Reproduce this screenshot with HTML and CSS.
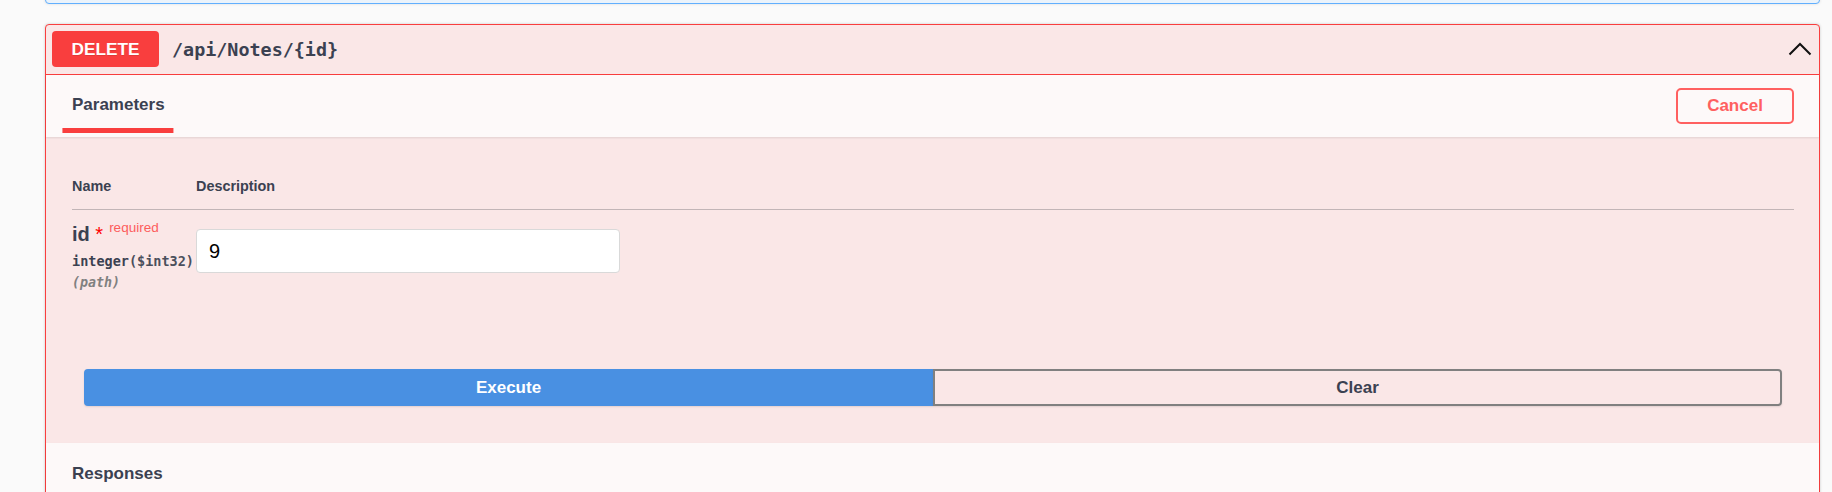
FILE: index.html
```html
<!DOCTYPE html>
<html lang="en">
<head>
<meta charset="utf-8">
<title>DELETE /api/Notes/{id}</title>
<link rel="stylesheet" href="styles.css">
</head>
<body>
<div class="wrap">
  <div class="opblock-get"></div>
  <div class="opblock">
    <div class="summary">
      <span class="method">DELETE</span>
      <span class="path">/api/Notes/{id}</span>
      <svg class="chevron" width="24" height="14" viewBox="0 0 24 14" aria-hidden="true">
        <polyline points="1.5,12.5 12,2 22.5,12.5" fill="none" stroke="#111" stroke-width="2"/>
      </svg>
    </div>
    <div class="section-header">
      <div class="tab"><span class="tab-label">Parameters</span></div>
      <button class="btn-cancel">Cancel</button>
    </div>
    <div class="params">
      <div class="params-head">
        <div class="col-name">Name</div>
        <div class="col-desc">Description</div>
      </div>
      <div class="param-row">
        <div class="col-name">
          <div class="param-name">id<span class="star">&nbsp;*</span><span class="req">required</span></div>
          <div class="param-type">integer<span class="fmt">($int32)</span></div>
          <div class="param-in">(path)</div>
        </div>
        <div class="col-desc desc-cell">
          <div class="input">9</div>
        </div>
      </div>
    </div>
    <div class="exec-wrap">
      <button class="btn-exec">Execute</button>
      <button class="btn-clear">Clear</button>
    </div>
    <div class="responses-header">Responses</div>
  </div>
</div>
</body>
</html>
```

FILE: styles.css
```css
* { box-sizing: border-box; }

html, body {
  margin: 0;
  padding: 0;
  background: #fafafa;
  height: 492px;
  overflow: hidden;
}

body {
  font-family: "Liberation Sans", Arial, sans-serif;
  color: #3b4151;
}

.wrap {
  padding: 0 12px 0 45px;
}

.opblock-get {
  height: 34px;
  margin-top: -30px;
  margin-bottom: 20px;
  border: 1px solid #61affe;
  border-radius: 4px;
  background: #ebf3fb;
  box-shadow: 0 0 3px rgba(0, 0, 0, 0.12);
}

.opblock {
  border: 1px solid #f93e3e;
  border-radius: 4px;
  background: #fae7e7;
  box-shadow: 0 0 3px rgba(0, 0, 0, 0.19);
  height: 520px;
}

.summary {
  display: flex;
  align-items: center;
  padding: 6px 6px 7px 6px;
  border-bottom: 1px solid #f93e3e;
}

.method {
  width: 107px;
  height: 36px;
  display: flex;
  align-items: center;
  justify-content: center;
  background: #f93e3e;
  color: #fff;
  border-radius: 4px;
  font-size: 17.2px;
  font-weight: 700;
  text-shadow: 0 1px 0 rgba(0, 0, 0, 0.1);
}

.path {
  flex: 1;
  padding-left: 13px;
  font-family: "DejaVu Sans Mono", monospace;
  font-weight: 700;
  font-size: 18.4px;
  color: #3b4151;
}

.chevron {
  display: block;
  margin-right: 1px;
}

.section-header {
  height: 62px;
  display: flex;
  align-items: center;
  justify-content: space-between;
  padding: 0 25px 0 26px;
  background: #fdf9f9;
  box-shadow: 0 1px 2px rgba(0, 0, 0, 0.1);
}

.tab {
  font-size: 17px;
  font-weight: 700;
  line-height: 20px;
  margin-top: -2px;
}

.tab-label {
  position: relative;
  display: inline-block;
}

.tab-label::after {
  content: "";
  position: absolute;
  top: calc(100% + 13px);
  left: 50%;
  width: 120%;
  height: 5px;
  transform: translateX(-50%);
  background: #f93e3e;
}

.btn-cancel {
  width: 118px;
  height: 36px;
  margin-top: -1px;
  border: 2px solid #ff6060;
  border-radius: 5px;
  background: transparent;
  color: #ff6060;
  font-family: "Liberation Sans", Arial, sans-serif;
  font-size: 17px;
  font-weight: 700;
  padding: 0;
}

.params {
  padding: 41px 25px 0 26px;
}

.params-head {
  display: flex;
  font-size: 14.4px;
  font-weight: 700;
  line-height: 17px;
  padding-bottom: 14px;
  border-bottom: 1px solid #c2b5b7;
}

.col-name {
  width: 124px;
  flex: none;
}

.col-desc {
  flex: 1;
}

.param-row {
  display: flex;
  padding-bottom: 12px;
}

.param-row .col-name {
  padding-top: 13px;
}

.param-name {
  font-size: 20px;
  font-weight: 700;
  line-height: 22px;
  white-space: nowrap;
  color: #3b4151;
}

.star {
  color: #ff0000;
  font-weight: 400;
}

.req {
  font-size: 13.5px;
  font-weight: 400;
  line-height: 0;
  color: #fd5c5c;
  padding-left: 6px;
  vertical-align: 9px;
}

.param-type {
  margin-top: 7px;
  font-family: "DejaVu Sans Mono", monospace;
  font-size: 13.5px;
  font-weight: 700;
  line-height: 18px;
  white-space: nowrap;
}

.fmt {
  color: #4a4f5c;
}

.param-in {
  margin-top: 4px;
  font-family: "DejaVu Sans Mono", monospace;
  font-size: 13.3px;
  font-weight: 700;
  font-style: italic;
  line-height: 18px;
  color: #808080;
}

.desc-cell {
  padding-top: 19px;
}

.input {
  width: 424px;
  height: 44px;
  background: #fff;
  border: 1px solid #d9d9d9;
  border-radius: 4px;
  padding: 0 12px;
  display: flex;
  align-items: center;
  font-size: 20px;
  color: #000;
}

.exec-wrap {
  display: flex;
  padding: 65px 37px 37px 38px;
}

.btn-exec,
.btn-clear {
  flex: 1;
  height: 37px;
  font-family: "Liberation Sans", Arial, sans-serif;
  font-size: 17px;
  font-weight: 700;
  padding: 0;
  box-shadow: 0 1px 2px rgba(0, 0, 0, 0.1);
}

.btn-exec {
  background: #4990e2;
  color: #fff;
  border: 2px solid #4990e2;
  border-radius: 4px 0 0 4px;
}

.btn-clear {
  background: transparent;
  color: #3b4151;
  border: 2px solid #808080;
  border-radius: 0 4px 4px 0;
}

.responses-header {
  background: #fdf9f9;
  box-shadow: 0 1px 2px rgba(0, 0, 0, 0.1);
  padding: 21px 26px 30px;
  font-size: 17px;
  font-weight: 700;
  line-height: 20px;
}
```
